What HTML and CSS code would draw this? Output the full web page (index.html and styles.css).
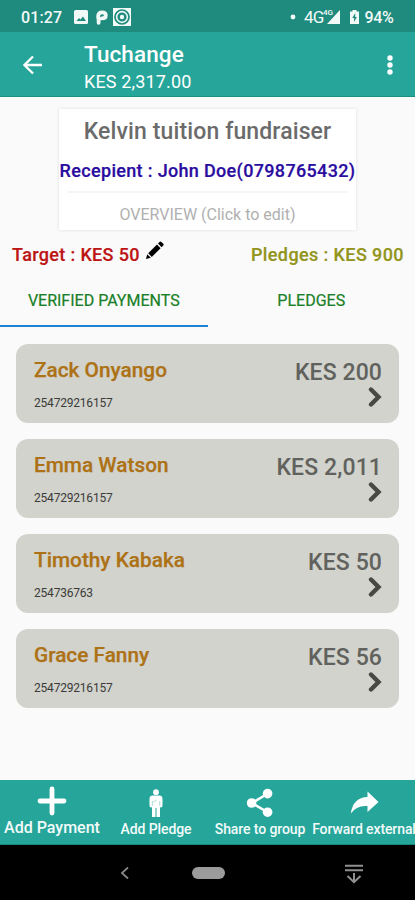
FILE: index.html
```html
<!DOCTYPE html>
<html lang="en">
<head>
<meta charset="utf-8">
<title>Tuchange</title>
<link rel="stylesheet" href="styles.css">
</head>
<body>
<div class="status">
  <span class="clock">01:27</span>
  <svg class="st-img" width="14" height="14" viewBox="0 0 14 14"><path fill="#f2faf8" fill-rule="evenodd" d="M1.5 0h11A1.5 1.5 0 0 1 14 1.5v11a1.5 1.5 0 0 1-1.500 1.500h-11A1.500 1.500 0 0 1 0 12.500v-11A1.500 1.500 0 0 1 1.500 0zM2.500 11h9.500L9 6.500l-2.500 3L5 8z"/></svg>
  <svg class="st-p" width="12" height="15" viewBox="0 0 12 15"><path fill="none" stroke="#f2faf8" stroke-width="3.800" stroke-linecap="round" d="M2.200 8V6Q2.200 2.400 6 2.400Q9.800 2.400 9.800 5.400Q9.800 8.400 5.800 8.400M2.600 8.500V12.800"/></svg>
  <svg class="st-disc" width="18" height="18" viewBox="0 0 18 18"><path fill="#f2faf8" d="M0 0h18v18H0z"/><circle cx="9" cy="9" r="7" fill="none" stroke="#1f8b7e" stroke-width="1.700"/><circle cx="9" cy="9" r="3.400" fill="none" stroke="#1f8b7e" stroke-width="2.400"/></svg>
  <svg class="st-dot" width="6" height="6" viewBox="0 0 6 6"><circle cx="3" cy="3" r="2.400" fill="#f2faf8"/></svg>
  <span class="net">4G</span>
  <span class="sig"><span class="net-small">4G</span><svg width="13" height="14" viewBox="0 0 13 14"><path fill="#f2faf8" d="M13 0v14H0z"/></svg></span>
  <svg class="bat" width="9" height="14" viewBox="0 0 9 14"><path fill="#f2faf8" fill-rule="evenodd" d="M2.500 0h4v1.500H9V14H0V1.500h2.500zM5.200 3L2.300 8h1.800v4l2.800-5H5.200z"/></svg>
  <span class="pct">94%</span>
</div>
<header class="bar">
  <svg class="back" width="20" height="20" viewBox="0 0 20 20"><path d="M19 10H2M10 1.500L1.500 10l8.500 8.500" fill="none" stroke="#fff" stroke-width="2.300"/></svg>
  <div class="heading"><h1>Tuchange</h1><p>KES 2,317.00</p></div>
  <svg class="more" width="6" height="20" viewBox="0 0 6 20"><g fill="#fff"><circle cx="3" cy="3" r="2.700"/><circle cx="3" cy="10" r="2.700"/><circle cx="3" cy="17" r="2.700"/></g></svg>
</header>
<main>
  <section class="summary">
    <h2>Kelvin tuition fundraiser</h2>
    <p class="recipient">Recepient : John Doe(0798765432)</p>
    <hr>
    <p class="overview">OVERVIEW (Click to edit)</p>
  </section>
  <div class="totals">
    <span class="target">Target : KES 50</span>
    <svg class="pencil" width="19" height="19" viewBox="0 0 19 19"><path d="M1 18l1.200-4.800 3.600 3.600zM3.200 12.200L12 3.600l3.600 3.600-8.800 8.700zM13 2.600l1.800-1.800q.8-.6 1.600.1l1.900 1.900q.7.800 0 1.600l-1.700 1.800z"/></svg>
    <span class="pledged">Pledges : KES 900</span>
  </div>
  <nav class="tabs"><span class="tab active"><b>VERIFIED PAYMENTS</b></span><span class="tab"><b>PLEDGES</b></span></nav>
  <div class="list">
    <article class="row"><div><h3>Zack Onyango</h3><p>254729216157</p></div><div class="side"><strong>KES 200</strong><svg width="14" height="22" viewBox="0 0 14 22"><path d="M3 3.500l7.500 7.500L3 18.500"/></svg></div></article>
    <article class="row"><div><h3>Emma Watson</h3><p>254729216157</p></div><div class="side"><strong>KES 2,011</strong><svg width="14" height="22" viewBox="0 0 14 22"><path d="M3 3.500l7.500 7.500L3 18.500"/></svg></div></article>
    <article class="row"><div><h3>Timothy Kabaka</h3><p>254736763</p></div><div class="side"><strong>KES 50</strong><svg width="14" height="22" viewBox="0 0 14 22"><path d="M3 3.500l7.500 7.500L3 18.500"/></svg></div></article>
    <article class="row"><div><h3>Grace Fanny</h3><p>254729216157</p></div><div class="side"><strong>KES 56</strong><svg width="14" height="22" viewBox="0 0 14 22"><path d="M3 3.500l7.500 7.500L3 18.500"/></svg></div></article>
  </div>
</main>
<footer class="actions">
  <div class="action first"><svg width="30" height="30" viewBox="0 0 30 30"><path d="M15 3v24M3 15h24" fill="none" stroke="#fff" stroke-width="4.800" stroke-linecap="round"/></svg><span>Add Payment</span></div>
  <div class="action"><svg width="30" height="30" viewBox="0 0 30 30"><g fill="#fff"><circle cx="15" cy="4.200" r="2.900"/><path d="M11.500 7.500h7q3 .3 3 3.500v6q0 2.500-1.700 2.500l-.8-.2V29h-3.500v-9h-1v9H11v-9.700l-.8.2q-1.700 0-1.700-2.500v-6q0-3.200 3-3.500z"/></g><path d="M11.300 13v5M18.800 13v5M12.500 14l3-2" fill="none" stroke="#7ccbc3" stroke-width=".7"/></svg><span>Add Pledge</span></div>
  <div class="action share"><svg width="30" height="30" viewBox="0 0 30 30"><path d="M23 5.500L7 15l16 9.500" fill="none" stroke="#fff" stroke-width="2.600"/><g fill="#fff"><circle cx="22.600" cy="5.600" r="4.800"/><circle cx="6.600" cy="15" r="4.800"/><circle cx="22.600" cy="24.200" r="4.800"/></g></svg><span>Share to group</span></div>
  <div class="action fwd"><svg width="30" height="30" viewBox="0 0 30 30"><path fill="#fff" d="M18.500 3.500L29.500 14 18.500 24v-6Q7.500 17 1.800 25.500 4 9.500 18.500 9z"/></svg><span>Forward external</span></div>
</footer>
<div class="navbar">
  <svg class="nav-back" width="10" height="14" viewBox="0 0 10 14"><path d="M8 1.500L2 7l6 5.500" fill="none" stroke="#858585" stroke-width="1.800"/></svg>
  <span class="pill"></span>
  <svg class="nav-down" width="18" height="20" viewBox="0 0 18 20"><path d="M0 1.700h18M0 6.200h18M9 9v9M2.500 12L9 18.200 15.500 12" fill="none" stroke="#909090" stroke-width="2"/></svg>
</div>
</body>
</html>
```

FILE: styles.css
```css
* { box-sizing: border-box; margin: 0; padding: 0; }
body {
  width: 415px; height: 900px; overflow: hidden;
  display: flex; flex-direction: column;
  background: #fafafa;
  font-family: Roboto, "Liberation Sans", sans-serif;
  white-space: nowrap;
}
svg { display: block; flex: none; }
h1, h2, h3, strong, b { font-weight: 500; }

.status { height: 32px; flex: none; background: #1f8b7e; color: #f2faf8; display: flex; align-items: center; padding: 2px 0 0 21px; font-size: 16px; font-weight: 500; }
.clock { width: 41px; letter-spacing: .15px; }
.st-img { margin-left: 12px; }
.st-p { margin-left: 8px; }
.st-disc { margin-left: 5px; }
.st-dot { margin-left: 159px; }
.net { margin-left: 8px; width: 20px; font-weight: 400; letter-spacing: -.8px; font-size: 17px; }
.sig { position: relative; margin-left: 3px; }
.net-small { position: absolute; left: -4px; top: -1px; font-size: 8px; line-height: 8px; }
.bat { margin-left: 9.500px; }
.pct { margin-left: 6px; font-size: 16px; letter-spacing: -.4px; }

.bar { height: 65px; flex: none; background: #26a69a; color: #fff; display: flex; border-bottom: 1px solid #159184; }
.back { margin: 23px 0 0 23px; }
.heading { margin-left: 41px; width: 280px; padding-top: 8px; }
.heading h1 { font-size: 22.500px; line-height: 28px; letter-spacing: .1px; }
.heading p { font-size: 18px; line-height: 26px; margin-top: 1px; letter-spacing: .15px; }
.more { margin: 23px 0 0 23px; }

main { flex: 1; }
.summary { width: 297px; height: 121px; margin: 12px 0 0 59px; background: #fff; box-shadow: 0 0 3px #ddd; text-align: center; }
.summary h2 { font-size: 23px; line-height: 30px; color: #6b6b6b; padding-top: 8px; letter-spacing: .12px; }
.recipient { font-size: 18px; line-height: 24px; margin-top: 12px; color: #2a0ca0; font-weight: 500; letter-spacing: .33px; -webkit-text-stroke: .2px currentColor; }
.summary hr { border: 0; height: 2px; background: #f4f4f4; margin: 8px 9px 0; }
.overview { font-size: 16px; line-height: 20px; margin-top: 12px; color: #b0b0b0; }

.totals { display: flex; height: 32px; margin-top: 9px; padding: 0 11px 0 12px; font-size: 18px; line-height: 32px; font-weight: 500; letter-spacing: .4px; -webkit-text-stroke: .2px currentColor; }
.target { color: #bd1414; width: 127px; letter-spacing: .35px; }
.pencil { margin: 2px 0 0 6px; }
.pledged { color: #92951a; margin-left: auto; }

.tabs { display: flex; height: 56px; color: #188026; font-size: 16px; line-height: 59px; }
.tab { flex: 1; text-align: center; }
.tab b { font-weight: 400; -webkit-text-stroke: .2px currentColor; }
.active { border-bottom: 2px solid #1d82d2; }

.list { padding: 17px 16px 0; display: grid; gap: 16px; }
.row { height: 79px; border-radius: 12px; background: #d2d3cc; display: flex; justify-content: space-between; padding: 0 17px 0 18px; }
.row h3 { font-size: 20.800px; line-height: 28px; padding-top: 12px; color: #ad7116; -webkit-text-stroke: .25px currentColor; }
.row p { font-size: 12px; line-height: 16px; margin-top: 11px; color: #3b3b39; letter-spacing: -.2px; }
.side { display: flex; flex-direction: column; align-items: flex-end; }
.side strong { font-size: 23px; line-height: 28px; margin-top: 15px; color: #61625e; letter-spacing: .1px; }
.side svg { margin-top: -1px; }
.side path { fill: none; stroke: #484945; stroke-width: 4.400; stroke-linecap: round; }

.actions { height: 65px; flex: none; background: #26a69a; color: #f3fbfa; display: grid; grid-template-columns: repeat(4, 104px); border-bottom: 1px solid #15897e; }
.action { display: flex; flex-direction: column; align-items: center; padding-top: 8px; font-size: 14px; font-weight: 500; letter-spacing: -.1px; }
.action span { line-height: 20px; margin-top: 1px; }
.first { padding-top: 6px; }
.first span { font-size: 16px; margin-top: 2px; letter-spacing: 0; }
.navbar { height: 55px; flex: none; background: #000; display: flex; }
.nav-back { margin: 21px 0 0 120px; }
.pill { width: 33px; height: 12px; border-radius: 6px; background: #9b9b9b; margin: 22px 0 0 62px; }
.nav-down { margin: 19px 0 0 120px; }
```
